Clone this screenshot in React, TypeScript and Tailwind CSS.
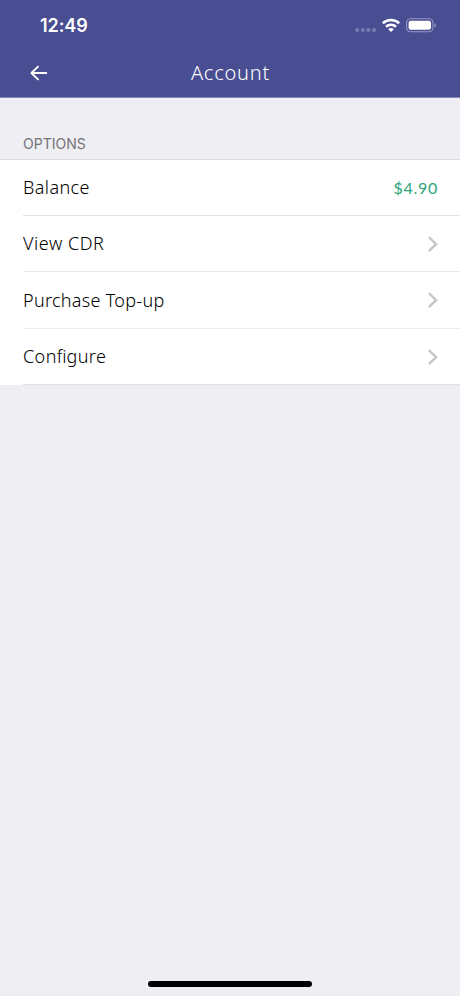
import React from "react";

const textFont = "font-['Noto_Sans',sans-serif] font-light whitespace-nowrap";

function Chevron() {
  return (
    <svg width="10" height="16" viewBox="0 0 10 16" fill="none" stroke="#c5c5c8" strokeWidth="2.3">
      <path d="M1.6 1.8 8.2 8.2l-6.6 6.2" strokeLinecap="round" strokeLinejoin="miter" />
    </svg>
  );
}

type RowProps = {
  label: React.ReactNode;
  height: string;
  tracking: string;
  line: string;
  value?: string;
};

function Row({ label, height, tracking, line, value }: RowProps) {
  return (
    <div className={`${height} bg-white pl-[23px]`}>
      <div className={`flex h-full items-center justify-between border-b pr-[22px] ${line}`}>
        <span className={`${textFont} pb-px text-[18px] leading-6 text-black ${tracking}`}>{label}</span>
        {value ? (
          <span className="font-['Lato',sans-serif] text-[16px] leading-6 tracking-[0.7px] text-[#2ba579]">{value}</span>
        ) : (
          <Chevron />
        )}
      </div>
    </div>
  );
}

export default function App() {
  return (
    <div className="flex h-[996px] w-[460px] flex-col overflow-hidden bg-[#efeef3]">
      <header className="h-[98px] shrink-0 border-b border-[#8589bb] bg-[#494e92] text-white">
        <div className="flex h-[50px] items-center justify-between pl-10 pr-6">
          <span className="pt-[2px] font-['Inter',sans-serif] text-[18px] font-semibold leading-6 tracking-[-0.1px]">12:49</span>
          <svg width="82" height="20" viewBox="0 0 82 20" fill="none">
            <g fill="#777bb1">
              <circle cx="3.2" cy="15" r="2.1" />
              <circle cx="8.8" cy="15" r="2.1" />
              <circle cx="14.4" cy="15" r="2.1" />
              <circle cx="20" cy="15" r="2.1" />
            </g>
            <g stroke="white" strokeWidth="2.6">
              <path d="M28.8 8.2a12.2 12.2 0 0 1 16.4 0" />
              <path d="M32 11.7a7.4 7.4 0 0 1 10 0" />
            </g>
            <path d="M34.2 14.2a4.1 4.1 0 0 1 5.6 0L37 17.1Z" fill="white" />
            <rect x="52.6" y="3.8" width="26.4" height="12.9" rx="4" stroke="#9598c3" strokeWidth="1.1" />
            <rect x="54.6" y="5.8" width="22.4" height="8.9" rx="2.2" fill="white" />
            <path d="M80.4 8.2q1.5.7 1.5 2t-1.5 2Z" fill="#9598c3" />
          </svg>
        </div>
        <div className="grid h-[46px] grid-cols-[60px_1fr_60px] items-center">
          <svg className="ml-[30px]" width="18" height="16" viewBox="0 0 18 16" fill="none" stroke="white" strokeWidth="1.9" strokeLinecap="round" strokeLinejoin="round">
            <path d="M8 1.6 1.4 8 8 14.4M1.6 8H16.3" />
          </svg>
          <h1 className={`${textFont} pl-px text-center text-[20px] leading-6 tracking-[0.8px]`}>Account</h1>
        </div>
      </header>
      <main>
        <div className="flex h-[62px] items-end border-b border-[#dcdce0] pb-[5px] pl-[23px]">
          <h2 className="font-['Inter',sans-serif] text-[14px] leading-5 text-[#737378]">OPTIONS</h2>
        </div>
        <Row label="Balance" height="h-[56px]" tracking="tracking-[0.4px]" line="border-[#e2e2e4]" value="$4.90" />
        <Row label="View CDR" height="h-[56px]" tracking="tracking-[0.55px]" line="border-[#e7e7e9]" />
        <Row label="Purchase Top-up" height="h-[57px]" tracking="tracking-[0.3px]" line="border-[#ededef]" />
        <Row
          label={<>Con<span className="tracking-normal">fi</span>gure</>}
          height="h-[56px]"
          tracking="tracking-[0.4px]"
          line="border-[#e1e1e5]"
        />
      </main>
      <div className="mx-auto mb-[9px] mt-auto h-[6px] w-[164px] rounded-full bg-black" />
    </div>
  );
}
